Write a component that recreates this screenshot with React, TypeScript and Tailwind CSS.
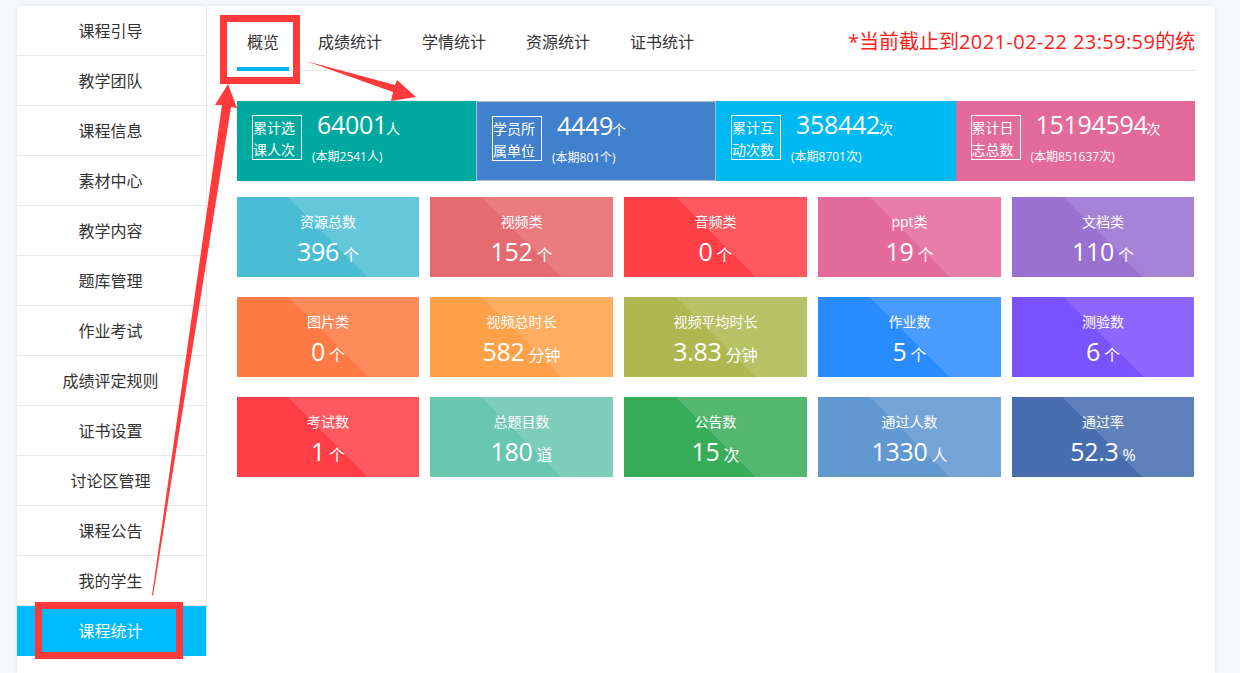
const font = { fontFamily: '"Open Sans","Noto Sans CJK SC",sans-serif' };

const menu = ["课程引导","教学团队","课程信息","素材中心","教学内容","题库管理","作业考试","成绩评定规则","证书设置","讨论区管理","课程公告","我的学生"];
const tabs = ["成绩统计","学情统计","资源统计","证书统计"];

const stats = [
  { cls: "bg-[#00a99f]", t: ["累计选","课人次"], n: "64001", u: "人", s: "(本期2541人)" },
  { cls: "bg-[#4080cc] border border-[#b4bcc8]", t: ["学员所","属单位"], n: "4449", u: "个", s: "(本期801个)" },
  { cls: "bg-[#00b9f1]", t: ["累计互","动次数"], n: "358442", u: "次", s: "(本期8701次)" },
  { cls: "bg-[#e36b9a]", t: ["累计日","志总数"], n: "15194594", u: "次", s: "(本期851637次)" },
];

const cards = [
  { t: "资源总数", n: "396", u: "个", c: "bg-[linear-gradient(45deg,#4abdd5_50%,#66c6da_50%)]" },
  { t: "视频类", n: "152", u: "个", c: "bg-[linear-gradient(45deg,#e56b70_50%,#ea7c80_50%)]" },
  { t: "音频类", n: "0", u: "个", c: "bg-[linear-gradient(45deg,#ff3e45_50%,#ff585e_50%)]" },
  { t: "ppt类", n: "19", u: "个", c: "bg-[linear-gradient(45deg,#e36b9a_50%,#e87ea8_50%)]" },
  { t: "文档类", n: "110", u: "个", c: "bg-[linear-gradient(45deg,#9a70d0_50%,#a582d6_50%)]" },
  { t: "图片类", n: "0", u: "个", c: "bg-[linear-gradient(45deg,#ff7a45_50%,#ff8b5c_50%)]" },
  { t: "视频总时长", n: "582", u: "分钟", c: "bg-[linear-gradient(45deg,#ffa149_50%,#ffad5f_50%)]" },
  { t: "视频平均时长", n: "3.83", u: "分钟", c: "bg-[linear-gradient(45deg,#adb950_50%,#b6c266_50%)]" },
  { t: "作业数", n: "5", u: "个", c: "bg-[linear-gradient(45deg,#288cff_50%,#4a9bff_50%)]" },
  { t: "测验数", n: "6", u: "个", c: "bg-[linear-gradient(45deg,#7b52ff_50%,#8c66ff_50%)]" },
  { t: "考试数", n: "1", u: "个", c: "bg-[linear-gradient(45deg,#ff3e45_50%,#ff585e_50%)]" },
  { t: "总题目数", n: "180", u: "道", c: "bg-[linear-gradient(45deg,#69c7b0_50%,#7dcdb9_50%)]" },
  { t: "公告数", n: "15", u: "次", c: "bg-[linear-gradient(45deg,#38ad59_50%,#54b76f_50%)]" },
  { t: "通过人数", n: "1330", u: "人", c: "bg-[linear-gradient(45deg,#6098cf_50%,#75a5d6_50%)]" },
  { t: "通过率", n: "52.3", u: "%", c: "bg-[linear-gradient(45deg,#486eb0_50%,#6080bb_50%)]" },
];

export default function App() {
  return (
    <div style={font} className="relative h-[673px] w-[1240px] overflow-hidden bg-[#f5f9fc] pl-[17px] pt-[6px]">
      <div className="flex h-[667px] w-[1198px] bg-white shadow-[0_0_4px_rgba(0,0,0,0.1)]">
        <aside className="h-[650px] w-[190px] shrink-0 border-r border-[#e8e8e8]">
          {menu.map((m) => (
            <div key={m} className="flex h-[50px] items-center justify-center border-b border-[#e8e8e8] pr-[2px] text-[16px] text-[#333]">{m}</div>
          ))}
          <div className="flex h-[50px] items-center justify-center bg-[#00bbff] pr-[2px] text-[16px] text-white">课程统计</div>
        </aside>
        <main className="w-[989px] shrink-0 pl-[30px]">
          <div className="flex h-[65px] w-[958px] items-center border-b border-[#e8e8e8]">
            <div className="relative flex h-[64px] w-[52px] shrink-0 items-center justify-center pt-[7px] text-[16px] text-[#333]">
              概览
              <span className="absolute bottom-[-1px] left-0 h-[4px] w-[52px] bg-[#00b4f5]"></span>
            </div>
            <div className="ml-[29px] flex shrink-0 gap-[40px] pt-[7px] text-[16px] text-[#333]">
              {tabs.map((t) => <span key={t}>{t}</span>)}
            </div>
            <div className="ml-auto w-[347px] whitespace-nowrap pt-[7px] text-[20px] text-[#ff1a1a]">
              *当前截止到<span className="tracking-[0.4px]">2021-02-22 23:59:59</span>的统
            </div>
          </div>
          <div className="mt-[30px] grid h-[80px] w-[958px] grid-cols-[239px_240px_239.5px_1fr]">
            {stats.map((s) => (
              <div key={s.n} className={`flex items-start pl-[15px] pt-[14px] text-white ${s.cls}`}>
                <div className="h-[45px] w-[50px] shrink-0 whitespace-nowrap border border-white pt-[1px] text-left text-[14px] leading-[22px]">
                  <div>{s.t[0]}</div>
                  <div>{s.t[1]}</div>
                </div>
                <div className="ml-[10px] whitespace-nowrap">
                  <div className="-mt-[10px] pl-[5px] leading-[38px]">
                    <span className="mr-[-1px] text-[25px] tracking-[-0.3px]">{s.n}</span>
                    <span className="text-[14px]">{s.u}</span>
                  </div>
                  <div className="-mt-[1px] text-[12px] leading-[20px]">{s.s}</div>
                </div>
              </div>
            ))}
          </div>
          <div className="mt-[16px] grid w-[957px] grid-cols-[182px_183px_183px_183px_182px] gap-x-[11px] gap-y-[20px]">
            {cards.map((c) => (
              <div key={c.t} className={`h-[80px] pt-[15px] text-center text-white ${c.c}`}>
                <div className="text-[14px] leading-[20px]">{c.t}</div>
                <div className="mt-[1px] whitespace-nowrap leading-[36px]">
                  <span className="text-[25px] tracking-[-0.3px]">{c.n}</span>
                  <span className="ml-[4px] text-[16px]">{c.u}</span>
                </div>
              </div>
            ))}
          </div>
        </main>
      </div>

      <div className="absolute left-[220px] top-[15px] h-[69px] w-[80px] border-[7px] border-[#ff3a3a]"></div>
      <div className="absolute left-[35px] top-[602px] h-[57px] w-[148px] border-[7px] border-[#ff3a3a]"></div>
      <svg className="absolute left-0 top-0" width="1240" height="673" viewBox="0 0 1240 673" fill="#ff3a3a">
        <polygon points="152,595 222,105 215,105 228,84 237,108 231,107 153,596" />
        <polygon points="306,61 395,85 397,80 416,97 391,101 393,92" />
      </svg>
    </div>
  );
}
